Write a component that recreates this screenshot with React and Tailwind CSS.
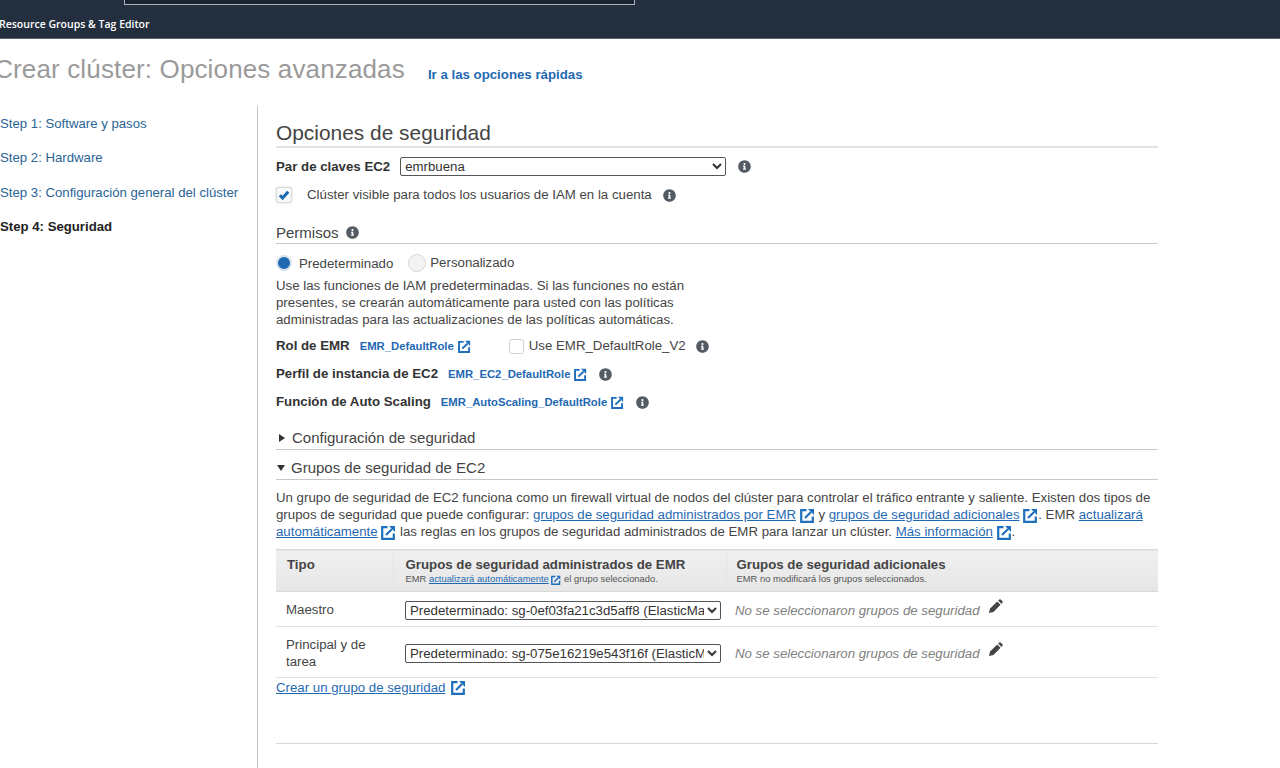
import React from "react";
import { FaInfoCircle } from "react-icons/fa";

const Info = ({ className = "" }) => (
  <FaInfoCircle className={`inline-block w-[13px] h-[13px] text-[#545b64] ${className}`} />
);

// square with arrow, heavier than the icon-pack versions
const Ext = ({ className = "w-[15px] h-[15px] -my-[3px] align-[-1px]" }) => (
  <svg viewBox="0 0 15 15" className={`inline-block text-[#1f6fbd] ${className}`}>
    <path d="M6.5 2.2H1.2v11.6h11.6V8.5" fill="none" stroke="currentColor" strokeWidth="2.2" />
    <path d="M5 10 L11 4" fill="none" stroke="currentColor" strokeWidth="2.2" />
    <path d="M8 1h6v6z" fill="currentColor" />
  </svg>
);

const Pencil = () => (
  <svg viewBox="0 0 16 16" className="inline-block ml-[8px] w-[15px] h-[15px] text-[#444] align-[1px]">
    <path d="M1 15 L2.2 10.2 L9.8 2.6 L13.4 6.2 L5.8 13.8 Z" fill="currentColor" />
    <path d="M10.8 1.6 L12 .6 Q13 0 13.8 .7 L15.3 2.2 Q16 3 15.4 4 L14.4 5.2 Z" fill="currentColor" />
  </svg>
);

const A = ({ children }) => (
  <a className="text-[#1f69b3] underline underline-offset-1">{children}</a>
);

const steps = [
  { label: "Step 1: Software y pasos" },
  { label: "Step 2: Hardware" },
  { label: "Step 3: Configuración general del clúster" },
  { label: "Step 4: Seguridad", active: true },
];

const RoleRow = ({ label, role, children, height }) => (
  <div className={`flex items-center ${height}`}>
    <span className="font-bold text-[#333]">{label}</span>
    <span className="ml-[10px] text-[11.3px] text-[#1f69b3] font-semibold">{role}</span>
    <Ext className="ml-1 w-[13px] h-[13px]" />
    {children}
  </div>
);

export default function App() {
  return (
    <div className="w-[1280px] h-[768px] overflow-hidden bg-white font-['Liberation_Sans',Arial,sans-serif] text-[13.25px] text-[#444]">
      {/* Top nav */}
      <div className="h-[39px] bg-[#232f3e] border-b border-[#59636f]">
        <div className="ml-[124px] w-[511px] h-[5px] border border-t-0 border-[#aab2bb] bg-[#1a2330]" />
        <div className="mt-[13px] -ml-[1px] text-[10.5px] leading-[13px] font-semibold text-white font-['Open_Sans',sans-serif]">
          Resource Groups &amp; Tag Editor
        </div>
      </div>

      {/* Title */}
      <div className="flex items-baseline h-[67px] pt-[14px] -ml-[5.85px]">
        <h1 className="text-[26px] leading-[33px] text-[#9a9a9a] tracking-[0.14px]">
          Crear clúster: Opciones avanzadas
        </h1>
        <a className="ml-[23px] text-[13.25px] font-bold text-[#1f69b3] relative top-[1px]">Ir a las opciones rápidas</a>
      </div>

      <div className="flex h-[662px]">
        {/* Steps */}
        <div className="w-[258px] shrink-0 border-r border-[#c4c4c4] pt-[10px]">
          {steps.map((s) => (
            <div
              key={s.label}
              className={`h-[34.3px] leading-[16px] text-[13.2px] ${
                s.active ? "font-bold text-[#222]" : "text-[#2a6496]"
              }`}
            >
              {s.label}
            </div>
          ))}
        </div>

        {/* Main */}
        <div className="ml-[18px] w-[882px] shrink-0">
          <h2 className="mt-[14px] h-[28px] text-[20.9px] leading-[25px] text-[#444] border-b-2 border-[#e2e2e2]">
            Opciones de seguridad
          </h2>

          <div className="flex items-center mt-[9px] h-[19px]">
            <span className="font-bold text-[#333]">Par de claves EC2</span>
            <select
              defaultValue="emrbuena"
              className="ml-[10px] w-[326px] h-[19px] border border-[#555] rounded-[2px] bg-white text-[13.25px] text-[#333] appearance-auto"
            >
              <option>emrbuena</option>
            </select>
            <Info className="ml-[12px]" />
          </div>

          <div className="flex items-center mt-[10px] h-[18px]">
            <span className="w-[16px] h-[16px] rounded-[3px] border border-[#d8d8d8] bg-[#fafafa] shadow-[0_0_2px_#ccc] flex items-center justify-center">
              <svg viewBox="0 0 12 12" className="w-[12px] h-[12px]">
                <path d="M1.8 6.2 L4.6 9 L10.2 2.8" fill="none" stroke="#1f69b3" strokeWidth="3" />
              </svg>
            </span>
            <span className="ml-[15px]">Clúster visible para todos los usuarios de IAM en la cuenta</span>
            <Info className="ml-[11px]" />
          </div>

          <div className="mt-[17px] h-[21px] flex items-center border-b border-[#c8c8c8] pb-[1px] text-[15px] leading-[18px] box-content">
            <span className="relative top-[1px]">Permisos</span>
            <Info className="ml-[7px] relative top-[1px]" />
          </div>

          <div className="flex items-center mt-[9px] h-[20px]">
            <span className="w-[16px] h-[16px] rounded-full bg-[#1f69b3] border-[2px] border-[#d8e2ee]" />
            <span className="ml-[7px] mt-[2px]">Predeterminado</span>
            <span className="ml-[15px] w-[18px] h-[18px] rounded-full bg-[#f3f3f3] border border-[#d8d8d8]" />
            <span className="ml-[4px]">Personalizado</span>
          </div>

          <p className="mt-[4px] w-[430px] leading-[17px]">
            Use las funciones de IAM predeterminadas. Si las funciones no están presentes, se crearán
            automáticamente para usted con las políticas administradas para las actualizaciones de las
            políticas automáticas.
          </p>

          <div className="mt-[8px]">
            <RoleRow label="Rol de EMR" role="EMR_DefaultRole" height="h-[20px]">
              <span className="ml-[38px] w-[15px] h-[15px] rounded-[3px] border border-[#d0d0d0] bg-white" />
              <span className="ml-[5px]">Use EMR_DefaultRole_V2</span>
              <Info className="ml-[10px]" />
            </RoleRow>
            <RoleRow label="Perfil de instancia de EC2" role="EMR_EC2_DefaultRole" height="h-[20px] mt-[8px]">
              <Info className="ml-[12px]" />
            </RoleRow>
            <RoleRow label="Función de Auto Scaling" role="EMR_AutoScaling_DefaultRole" height="h-[20px] mt-[8px]">
              <Info className="ml-[12px]" />
            </RoleRow>
          </div>

          <div className="mt-[15px] h-[22px] flex items-center border-b border-[#c8c8c8] text-[15px] box-content pb-0">
            <span className="w-0 h-0 border-y-[4px] border-y-transparent border-l-[6px] border-l-[#333] ml-[3px] mr-[7px]" />
            Configuración de seguridad
          </div>

          <div className="mt-[7px] h-[22px] flex items-center border-b border-[#c8c8c8] text-[15px] box-content">
            <span className="w-0 h-0 border-x-[4px] border-x-transparent border-t-[6px] border-t-[#333] ml-[1px] mr-[6px]" />
            Grupos de seguridad de EC2
          </div>

          <p className="mt-[8px] leading-[17px] pt-[1px]">
            Un grupo de seguridad de EC2 funciona como un firewall virtual de nodos del clúster para controlar el
            tráfico entrante y saliente. Existen dos tipos de grupos de seguridad que puede configurar:{" "}
            <A>grupos de seguridad administrados por EMR</A> <Ext /> y <A>grupos de seguridad adicionales</A> <Ext />.
            EMR <A>actualizará automáticamente</A> <Ext /> las reglas en los grupos de seguridad administrados de EMR
            para lanzar un clúster. <A>Más información</A> <Ext />.
          </p>

          {/* Table */}
          <table className="mt-[9px] w-full border-collapse table-fixed">
            <thead>
              <tr className="h-[42px] bg-gradient-to-b from-[#f0f0f0] to-[#e6e6e6] border-t border-b border-[#d8d8d8] align-top text-left">
                <th className="w-[117px] pl-[11px] pt-[7px] text-[13.25px] text-[#444] leading-[16px]">Tipo</th>
                <th className="w-[333px] pl-[12px] pt-[7px] font-normal border-l border-[#e4e4e4]">
                  <div className="text-[13.25px] font-bold leading-[16px] text-[#444]">
                    Grupos de seguridad administrados de EMR
                  </div>
                  <div className="text-[9.4px] leading-[11px] text-[#555]">
                    EMR <span className="text-[#1f69b3] underline">actualizará automáticamente</span>{" "}
                    <Ext className="w-[10px] h-[10px] -my-[2px] align-[-1px]" /> el grupo seleccionado.
                  </div>
                </th>
                <th className="pl-[10px] pt-[7px] font-normal border-l border-[#e4e4e4]">
                  <div className="text-[13.25px] font-bold leading-[16px] text-[#444]">
                    Grupos de seguridad adicionales
                  </div>
                  <div className="text-[9.4px] leading-[11px] text-[#555]">
                    EMR no modificará los grupos seleccionados.
                  </div>
                </th>
              </tr>
            </thead>
            <tbody>
              <tr className="h-[35px] border-b border-[#e2e2e2]">
                <td className="pl-[10px] pt-[2px]">Maestro</td>
                <td className="pl-[12px] pt-[2px]">
                  <select
                    defaultValue="a"
                    className="block w-[316px] h-[19px] border border-[#555] rounded-[2px] bg-white text-[13.25px] text-[#333] appearance-auto"
                  >
                    <option value="a">Predeterminado: sg-0ef03fa21c3d5aff8 (ElasticMapReduce-master)</option>
                  </select>
                </td>
                <td className="pl-[9px] pt-[2px] italic text-[#808080]">
                  No se seleccionaron grupos de seguridad
                  <Pencil />
                </td>
              </tr>
              <tr className="h-[51px] border-b border-[#e2e2e2]">
                <td className="pl-[10px] pt-[2px] leading-[17px]">Principal y de tarea</td>
                <td className="pl-[12px] pt-[2px]">
                  <select
                    defaultValue="a"
                    className="block w-[316px] h-[19px] border border-[#555] rounded-[2px] bg-white text-[13.25px] text-[#333] appearance-auto"
                  >
                    <option value="a">Predeterminado: sg-075e16219e543f16f (ElasticMapReduce-slave)</option>
                  </select>
                </td>
                <td className="pl-[9px] pt-[2px] italic text-[#808080]">
                  No se seleccionaron grupos de seguridad
                  <Pencil />
                </td>
              </tr>
            </tbody>
          </table>

          <div className="mt-[1px] leading-[17px]">
            <A>Crear un grupo de seguridad</A> <Ext className="ml-[2px] w-[15px] h-[15px] -my-[3px] align-[0px]" />
          </div>

          <div className="mt-[47px] border-t border-[#d8d8d8]" />
        </div>
      </div>
    </div>
  );
}
